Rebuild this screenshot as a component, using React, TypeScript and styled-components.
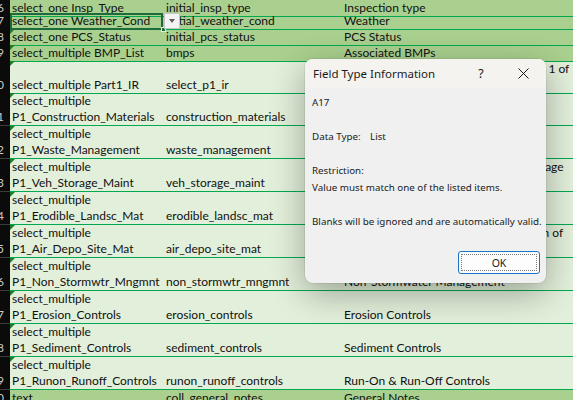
import React from 'react';
import styled, { createGlobalStyle } from 'styled-components';

const GlobalStyle = createGlobalStyle`
  html, body {
    margin: 0;
    padding: 0;
  }
  body {
    width: 573px;
    height: 400px;
    overflow: hidden;
    background: #e2efda;
    font-family: Lato, "Liberation Sans", sans-serif;
  }
`;

const Sheet = styled.div`
  position: relative;
  width: 573px;
  height: 400px;
  overflow: hidden;
`;

const Row = styled.div<{ $h: number; $dark?: boolean }>`
  display: grid;
  grid-template-columns: 10px 153px 178px 1fr;
  height: ${(p) => p.$h}px;
  background: ${(p) => (p.$dark ? '#a9d08e' : '#e2efda')};
`;

const RowHeader = styled.div`
  background: #0b0b0b;
  color: #c8c8c8;
  font-size: 12px;
  line-height: 16px;
  text-align: right;
  padding-right: 6px;
  white-space: nowrap;
  overflow: hidden;
  display: flex;
  flex-direction: column;
  justify-content: flex-end;
  align-items: flex-end;
  border-bottom: 1px solid #3c3c3c;
  box-sizing: border-box;
`;

const Cell = styled.div<{ $flag?: boolean; $selected?: boolean }>`
  position: relative;
  box-sizing: border-box;
  border-bottom: 1px solid #00a94f;
  padding: 0 2px 0 3px;
  display: flex;
  flex-direction: column;
  justify-content: flex-end;
  font-size: 12px;
  line-height: 16px;
  color: #111;
  white-space: nowrap;
  min-width: 0;

  ${(p) =>
    p.$flag &&
    `
    &::before {
      content: '';
      position: absolute;
      left: 0;
      top: 0;
      border-top: 5px solid #1f7d2c;
      border-right: 5px solid transparent;
    }
  `}

  ${(p) =>
    p.$selected &&
    `
    outline: 2px solid #1d6b3c;
    outline-offset: -2px;
    z-index: 2;
  `}
`;

const FirstCell = styled(Cell)`
  padding-left: 2px;
`;

const FillHandle = styled.span`
  position: absolute;
  right: -3px;
  bottom: -3px;
  width: 5px;
  height: 5px;
  background: #1d6b3c;
  border: 1px solid #e2efda;
  box-sizing: border-box;
`;

const DropButton = styled.span`
  position: absolute;
  right: -17px;
  top: 0;
  width: 16px;
  height: 16px;
  box-sizing: border-box;
  background: #f3f3f3;
  border: 1px solid #c6c6c6;
  display: flex;
  align-items: center;
  justify-content: center;
`;

const DropArrow = styled.span`
  width: 0;
  height: 0;
  border-left: 3.5px solid transparent;
  border-right: 3.5px solid transparent;
  border-top: 4px solid #5c5c5c;
`;

const Line = styled.div``;

/* ---------- dialog ---------- */

const Dialog = styled.div`
  position: absolute;
  left: 305px;
  top: 59px;
  width: 241px;
  height: 224px;
  box-sizing: border-box;
  border-radius: 8px;
  background: #f0f0f0;
  box-shadow: 0 10px 34px rgba(0, 0, 0, 0.32), 0 0 0 1px rgba(0, 0, 0, 0.06);
  display: flex;
  flex-direction: column;
  overflow: hidden;
  font-family: "Noto Sans", "Open Sans", sans-serif;
  color: #1b1b1b;
  z-index: 5;
`;

const TitleBar = styled.div`
  height: 29px;
  background: #f4f3f0;
  display: flex;
  align-items: center;
  padding-left: 8px;
  flex-shrink: 0;
`;

const Title = styled.div`
  flex: 1;
  font-size: 11.5px;
  white-space: nowrap;
`;

const TitleButton = styled.div<{ $w: number }>`
  width: ${(p) => p.$w}px;
  height: 29px;
  display: flex;
  align-items: center;
  justify-content: center;
  font-size: 12.5px;
`;

const Body = styled.div`
  flex: 1;
  padding: 6px 3px 0 7px;
  font-size: 9.8px;
  line-height: 17px;
  white-space: nowrap;
`;

const Para = styled.div<{ $space?: boolean }>`
  margin-bottom: ${(p) => (p.$space ? '17px' : '0')};
`;

const Label = styled.span`
  display: inline-block;
  width: 58px;
`;

const Footer = styled.div`
  display: flex;
  justify-content: flex-end;
  padding: 0 6px 9px 0;
`;

const OkButton = styled.button`
  width: 82px;
  height: 23px;
  box-sizing: border-box;
  border: 1px solid #1a73c9;
  border-radius: 3px;
  background: #fdfdfd;
  padding: 2px;
  font-family: inherit;
  font-size: 10.5px;
  color: #1b1b1b;
  display: flex;
`;

const FocusRing = styled.span`
  flex: 1;
  border: 1px dotted #7a7a7a;
  display: flex;
  align-items: center;
  justify-content: center;
`;

type RowData = {
  n: number;
  h: number;
  dark?: boolean;
  flag?: boolean;
  selected?: boolean;
  a: string[];
  b: string;
  c: string[];
};

const rows: RowData[] = [
  { n: 16, h: 13, dark: true, a: ['select_one Insp_Type'], b: 'initial_insp_type', c: ['Inspection type'] },
  { n: 17, h: 16, dark: true, selected: true, a: ['select_one Weather_Cond'], b: 'initial_weather_cond', c: ['Weather'] },
  { n: 18, h: 16, dark: true, flag: true, a: ['select_one PCS_Status'], b: 'initial_pcs_status', c: ['PCS Status'] },
  { n: 19, h: 16, dark: true, flag: true, a: ['select_multiple BMP_List'], b: 'bmps', c: ['Associated BMPs'] },
  { n: 20, h: 32, flag: true, a: ['select_multiple Part1_IR'], b: 'select_p1_ir', c: ['Part 1 Field Inspection Requirements - 1 of', 'the Stormwater Plan'] },
  { n: 21, h: 33, flag: true, a: ['select_multiple', 'P1_Construction_Materials'], b: 'construction_materials', c: ['Construction Materials'] },
  { n: 22, h: 33, flag: true, a: ['select_multiple', 'P1_Waste_Management'], b: 'waste_management', c: ['Waste Management'] },
  { n: 23, h: 33, flag: true, a: ['select_multiple', 'P1_Veh_Storage_Maint'], b: 'veh_storage_maint', c: ['Vehicle and Heavy Equipment Lot Storage', 'and Maintenance'] },
  { n: 24, h: 33, flag: true, a: ['select_multiple', 'P1_Erodible_Landsc_Mat'], b: 'erodible_landsc_mat', c: ['Erodible Landscape Material'] },
  { n: 25, h: 33, flag: true, a: ['select_multiple', 'P1_Air_Depo_Site_Mat'], b: 'air_depo_site_mat', c: ['Site Material Debris and Air Deposition of', 'Particulates'] },
  { n: 26, h: 33, flag: true, a: ['select_multiple', 'P1_Non_Stormwtr_Mngmnt'], b: 'non_stormwtr_mngmnt', c: ['Non-Stormwater Management'] },
  { n: 27, h: 33, flag: true, a: ['select_multiple', 'P1_Erosion_Controls'], b: 'erosion_controls', c: ['Erosion Controls'] },
  { n: 28, h: 33, flag: true, a: ['select_multiple', 'P1_Sediment_Controls'], b: 'sediment_controls', c: ['Sediment Controls'] },
  { n: 29, h: 33, flag: true, a: ['select_multiple', 'P1_Runon_Runoff_Controls'], b: 'runon_runoff_controls', c: ['Run-On & Run-Off Controls'] },
  { n: 30, h: 16, dark: true, a: ['text'], b: 'coll_general_notes', c: ['General Notes'] },
];

const CloseIcon = () => (
  <svg width="11" height="11" viewBox="0 0 11 11">
    <path d="M0.5 0.5 L10.5 10.5 M10.5 0.5 L0.5 10.5" stroke="#1b1b1b" strokeWidth="1" fill="none" />
  </svg>
);

export default function App() {
  return (
    <>
      <GlobalStyle />
      <Sheet>
        {rows.map((r) => (
          <Row key={r.n} $h={r.h} $dark={r.dark}>
            <RowHeader>{r.n}</RowHeader>
            <FirstCell $flag={r.flag} $selected={r.selected}>
              {r.a.map((t) => (
                <Line key={t}>{t}</Line>
              ))}
              {r.selected && (
                <>
                  <FillHandle />
                  <DropButton>
                    <DropArrow />
                  </DropButton>
                </>
              )}
            </FirstCell>
            <Cell>{r.b}</Cell>
            <Cell>
              {r.c.map((t) => (
                <Line key={t}>{t}</Line>
              ))}
            </Cell>
          </Row>
        ))}

        <Dialog role="dialog" aria-label="Field Type Information">
          <TitleBar>
            <Title>Field Type Information</Title>
            <TitleButton $w={40}>?</TitleButton>
            <TitleButton $w={45}>
              <CloseIcon />
            </TitleButton>
          </TitleBar>
          <Body>
            <Para $space>A17</Para>
            <Para $space>
              <Label>Data Type:</Label>List
            </Para>
            <Para>Restriction:</Para>
            <Para $space>Value must match one of the listed items.</Para>
            <Para>Blanks will be ignored and are automatically valid.</Para>
          </Body>
          <Footer>
            <OkButton>
              <FocusRing>OK</FocusRing>
            </OkButton>
          </Footer>
        </Dialog>
      </Sheet>
    </>
  );
}
